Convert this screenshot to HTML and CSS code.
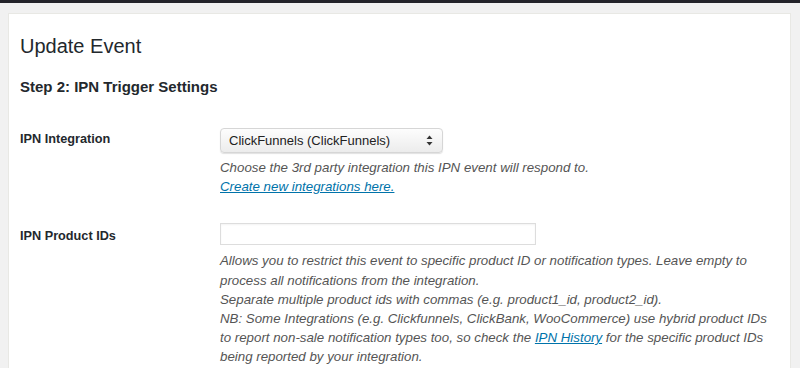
FILE: index.html
```html
<!DOCTYPE html>
<html lang="en">
<head>
    <meta charset="UTF-8">
    <meta name="viewport" content="width=device-width, initial-scale=1.0">
    <title>Update Event</title>
    <link rel="stylesheet" href="styles.css">
</head>
<body>
    <div class="adminbar"></div>
    <div class="wrap">
        <h1 class="title">Update Event</h1>
        <h2 class="step">Step 2: IPN Trigger Settings</h2>

        <div class="row first">
            <div class="label">IPN Integration</div>
            <div class="field">
                <div class="select">
                    <span>ClickFunnels (ClickFunnels)</span>
                    <svg width="7" height="11" viewBox="0 0 7 11">
                        <path d="M3.5 0.5 L6.5 4 L0.5 4 Z" fill="#333"/>
                        <path d="M3.5 10.5 L6.5 7 L0.5 7 Z" fill="#333"/>
                    </svg>
                </div>
                <p class="desc">Choose the 3rd party integration this IPN event will respond to.<br>
                <a href="#">Create new integrations here.</a></p>
            </div>
        </div>

        <div class="row second">
            <div class="label">IPN Product IDs</div>
            <div class="field">
                <input type="text" class="text">
                <p class="desc">Allows you to restrict this event to specific product ID or notification types. Leave empty to process all notifications from the integration.<br>
                Separate multiple product ids with commas (e.g. product1_id, product2_id).<br>
                NB: Some Integrations (e.g. Clickfunnels, ClickBank, WooCommerce) use hybrid product IDs to report non-sale notification types too, so check the <a href="#">IPN History</a> for the specific product IDs being reported by your integration.</p>
            </div>
        </div>
    </div>
</body>
</html>
```

FILE: styles.css
```css
body,p,h1,h2{
    margin:0;
}
body{
    background-color:#f1f1f1;
    font-family:"Liberation Sans", Arial, sans-serif;
    color:#23282d;
    overflow:hidden;
}
.adminbar{
    height:3px;
    background-color:#23232a;
}
.wrap{
    margin:10px 9px 0 8px;
    padding:19px 11px 40px;
    background-color:#fff;
    border:1px solid #e8e8e4;
    border-bottom:none;
}
.title{
    font-size:20px;
    font-weight:400;
    line-height:26px;
}
.step{
    margin-top:18px;
    font-size:15px;
    font-weight:700;
    line-height:20px;
}
.row{
    display:grid;
    grid-template-columns:200px 1fr;
    align-items:start;
}
.row.first{
    margin-top:31px;
}
.row.second{
    margin-top:27px;
}
.label{
    padding-top:2px;
    font-size:12.7px;
    font-weight:700;
    line-height:19.5px;
}
.second .label{
    padding-top:4px;
}
.select{
    display:flex;
    align-items:center;
    justify-content:space-between;
    box-sizing:border-box;
    width:223px;
    height:25px;
    padding:0 9px 0 8px;
    font-size:13px;
    color:#222;
    background:linear-gradient(#fdfdfd, #ececec);
    border:1px solid #d6d6d6;
    border-radius:4px;
    box-shadow:0 1px 1px rgba(0,0,0,.12);
}
.text{
    display:block;
    box-sizing:border-box;
    width:316px;
    height:22px;
    margin:0;
    padding:0 6px;
    border:1px solid #ddd;
    box-shadow:inset 0 1px 2px rgba(0,0,0,.05);
    outline:none;
}
.desc{
    margin-top:5px;
    font-size:13.3px;
    font-style:italic;
    line-height:19.2px;
    color:#555;
    max-width:552px;
}
.second .desc{
    margin-top:6px;
}
.desc a{
    color:#0073aa;
    text-decoration:underline;
}
```
